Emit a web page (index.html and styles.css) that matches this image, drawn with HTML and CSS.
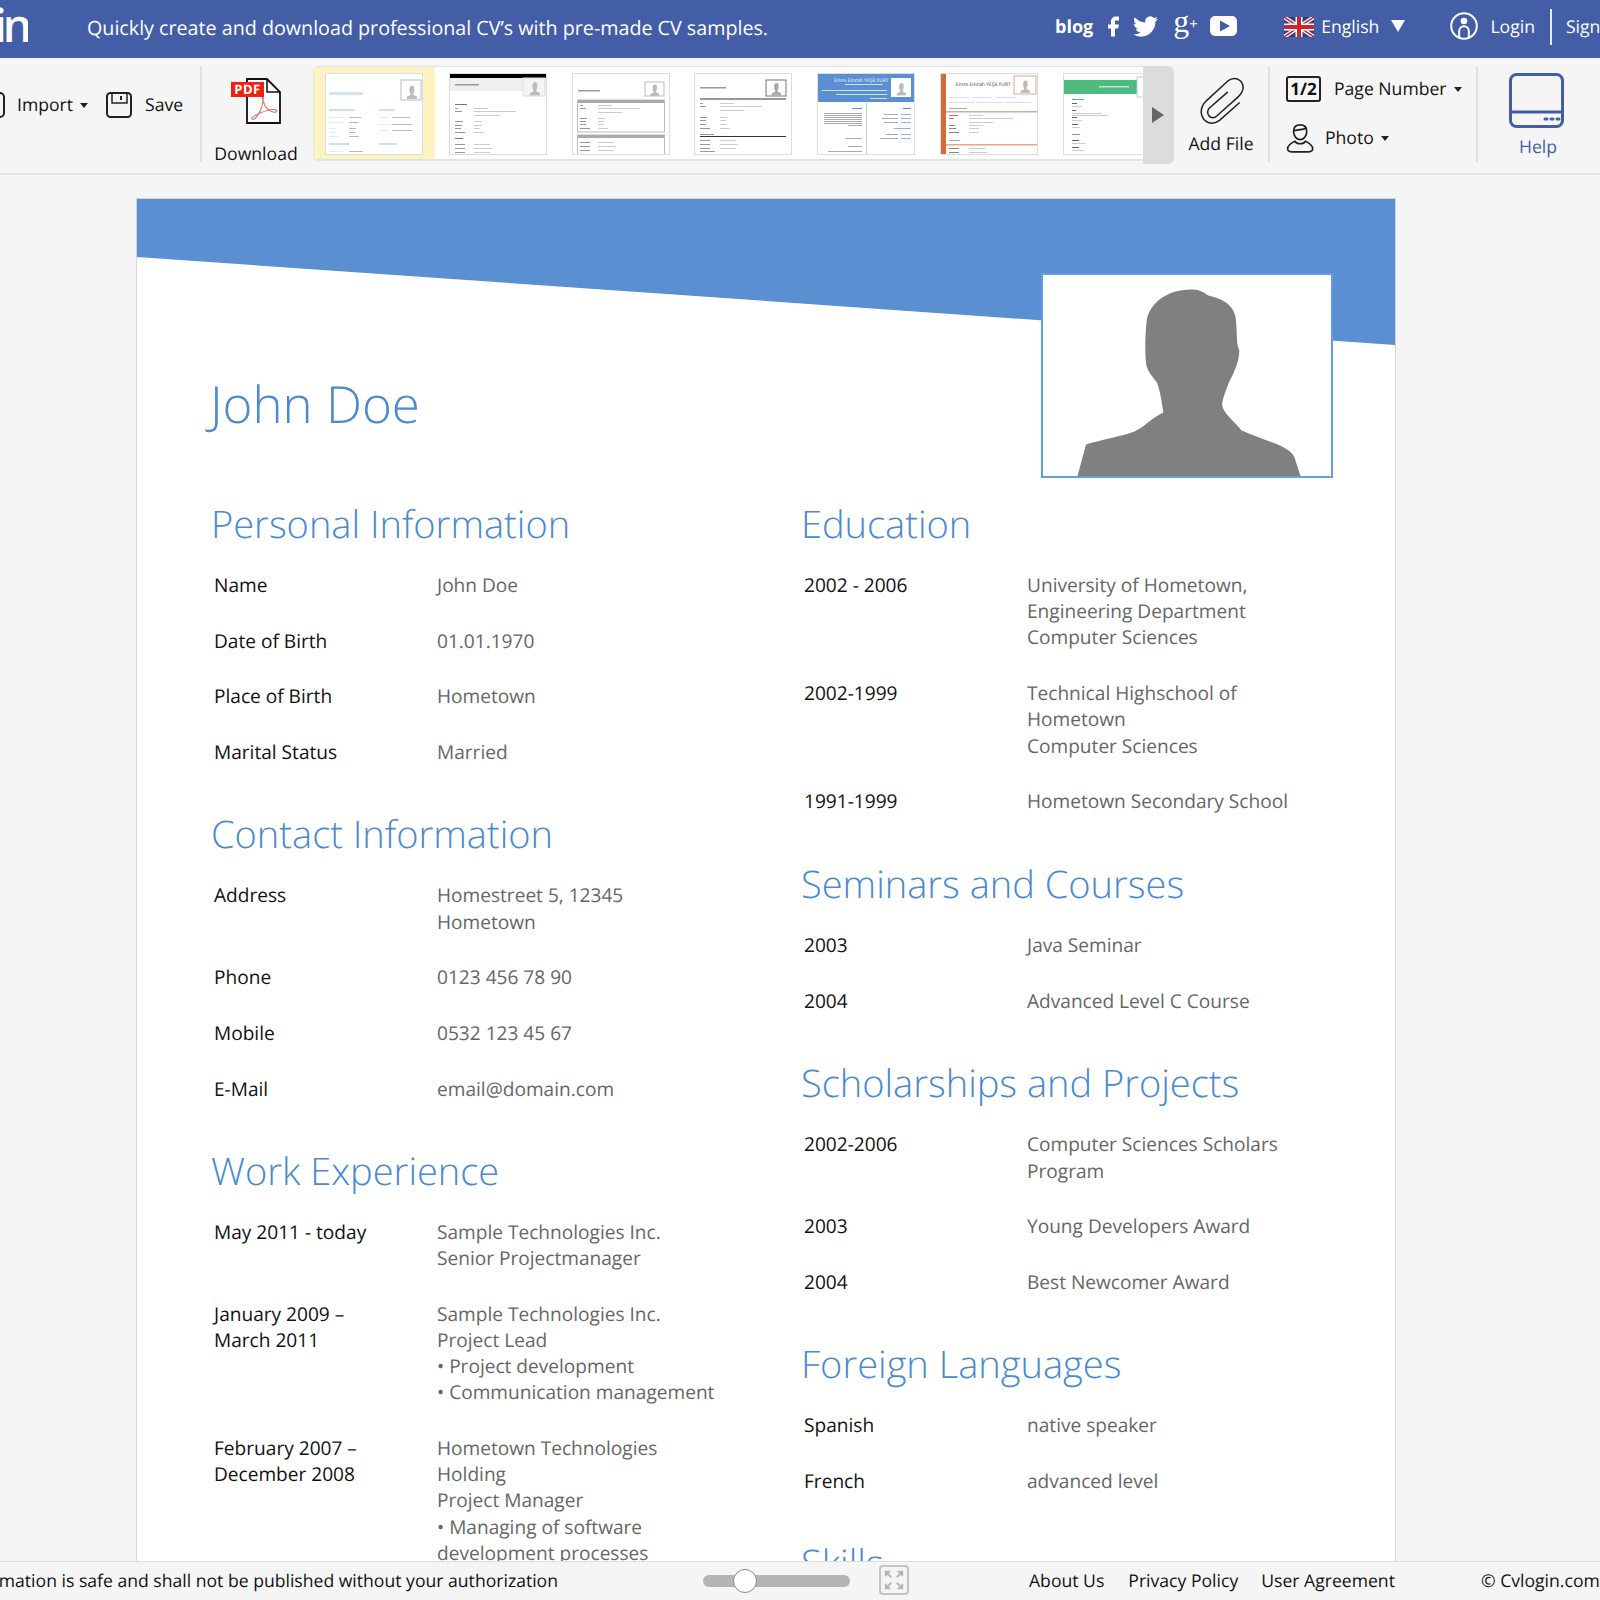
FILE: index.html
```html
<!DOCTYPE html>
<html lang="en">
<head>
  <meta charset="UTF-8">
  <title>Cvlogin - CV Editor</title>
  <link rel="stylesheet" href="styles.css">
</head>
<body>

<svg class="cv-defs" width="0" height="0">
  <symbol id="mini-head" viewBox="0 0 24 24">
    <path d="M4 24l1-4 5-2 .6-2-1.600-3-.4-5 1-4 3-1.500 3 1 1 4-.4 5-1.600 3 .6 2 5 2 1 4z"/>
  </symbol>
</svg>

<header class="topbar">
  <div class="topbar-logo"><span>Cvlogin</span></div>
  <div class="topbar-tagline">Quickly create and download professional CV’s with pre-made CV samples.</div>
  <div class="topbar-right">
    <a class="topbar-blog">blog</a>
    <svg class="icon-f" viewBox="6 4 11 20"><path d="M14 8h3V4h-3c-3 0-5 2-5 5v3H6v4h3v8h4v-8h3l1-4h-4V9c0-.6.4-1 1-1z"/></svg>
    <svg class="icon-tw" viewBox="0 2 24 20"><path d="M23.953 4.57a10 10 0 01-2.825.775 4.958 4.958 0 002.163-2.723c-.951.555-2.005.959-3.127 1.184a4.92 4.92 0 00-8.384 4.482C7.69 8.095 4.067 6.13 1.64 3.162a4.822 4.822 0 00-.666 2.475c0 1.710.87 3.213 2.188 4.096a4.904 4.904 0 01-2.228-.616v.06a4.923 4.923 0 003.946 4.827 4.996 4.996 0 01-2.212.085 4.936 4.936 0 004.604 3.417 9.867 9.867 0 01-6.102 2.105c-.39 0-.779-.023-1.170-.067a13.995 13.995 0 007.557 2.209c9.053 0 13.998-7.496 13.998-13.985 0-.21 0-.42-.015-.63A9.935 9.935 0 0024 4.59z"/></svg>
    <span class="icon-gplus">g<small>+</small></span>
    <svg class="icon-yt" viewBox="0 0 27 20"><path fill-rule="evenodd" d="M5 0h17a5 5 0 015 5v10a5 5 0 01-5 5H5a5 5 0 01-5-5V5a5 5 0 015-5zm5 4.500v11l10-5.500z"/></svg>
    <svg class="icon-flag" viewBox="0 0 30 20">
      <rect width="30" height="20" rx="1" fill="#2b3f87"/>
      <path d="M0 0l30 20M30 0L0 20" stroke="#fff" stroke-width="4"/>
      <path d="M0 0l30 20M30 0L0 20" stroke="#d2232c" stroke-width="1.500"/>
      <path d="M15 0v20M0 10h30" stroke="#fff" stroke-width="7"/>
      <path d="M15 0v20M0 10h30" stroke="#d2232c" stroke-width="4"/>
    </svg>
    <span class="topbar-lang">English</span>
    <span class="tri-down"></span>
    <svg class="icon-user" viewBox="0 0 28 28" fill="none" stroke="#fff">
      <circle cx="14" cy="14" r="12.800" stroke-width="2"/>
      <circle cx="14" cy="9" r="3.300" fill="#fff" stroke="none"/>
      <path d="M9.200 26V19a4.800 4.800 0 019.600 0v7" stroke-width="2"/>
    </svg>
    <span class="topbar-login">Login</span>
    <span class="topbar-sep"></span>
    <span class="topbar-sign">Sign up</span>
  </div>
</header>

<nav class="toolbar">
  <div class="tool-files">
    <svg class="icon-import" viewBox="0 0 26 26" fill="none" stroke="#222" stroke-width="2"><rect x="1" y="1" width="24" height="24" rx="4"/></svg>
    <span>Import</span>
    <span class="caret"></span>
    <svg class="icon-save" viewBox="0 0 26 26" fill="none" stroke="#222" stroke-width="2">
      <rect x="1" y="1" width="24" height="24" rx="3.500"/>
      <path d="M6 1v10h15V1" stroke-width="1.500"/>
      <path d="M15 4v4"/>
    </svg>
    <span>Save</span>
  </div>

  <div class="tool-download">
    <svg class="icon-pdf" viewBox="0 0 48 47">
      <path d="M13 1h20l13 13v31H13z" fill="#fff" stroke="#111" stroke-width="1.800"/>
      <path d="M33 1v13h13" fill="none" stroke="#111" stroke-width="1.500"/>
      <path d="M18 41c3 2 8-6 10-13 1-4 2-8 1-10-1-1-1 2 0 5 2 6 6 10 10 11 3 1 5-1 3-2-5-2-14 2-20 5-3 2-5 3-4 4z" fill="none" stroke="#e8706a" stroke-width="1.100"/>
    </svg>
    <span class="pdf-badge">PDF</span>
    <span class="tool-download-label">Download</span>
  </div>

  <div class="template-strip">
    <div class="template-list">
      <div class="template-item template-item-active">
        <svg class="thumb" viewBox="0 0 96 80">
          <rect x="75" y="6" width="20" height="20" fill="#fff" stroke="#a9c0d8"/>
          <use href="#mini-head" x="78" y="9" width="15" height="17" fill="#bbb"/>
          <rect x="3" y="18" width="34" height="3" fill="#d5e2f0"/>
          <rect x="3" y="35" width="26" height="2" fill="#cfdeef"/><rect x="53" y="35" width="16" height="2" fill="#cfdeef"/>
          <g fill="#e2eaf3"><rect x="3" y="43" width="16" height="1"/><rect x="3" y="48" width="13" height="1"/><rect x="3" y="54" width="8" height="1"/><rect x="3" y="58" width="7" height="1"/><rect x="3" y="62" width="10" height="1"/><rect x="53" y="43" width="10" height="1"/><rect x="53" y="50" width="10" height="1"/><rect x="53" y="56" width="10" height="1"/></g>
          <g fill="#bbb"><rect x="23" y="43" width="12" height="1"/><rect x="23" y="48" width="9" height="1"/><rect x="23" y="54" width="7" height="1"/><rect x="23" y="58" width="6" height="1"/><rect x="23" y="62" width="10" height="1"/><rect x="66" y="43" width="18" height="1"/><rect x="66" y="50" width="20" height="1"/><rect x="66" y="56" width="20" height="1"/></g>
          <rect x="3" y="69" width="20" height="2" fill="#cfdeef"/><rect x="53" y="69" width="18" height="2" fill="#cfdeef"/>
          <rect x="3" y="77" width="14" height="1" fill="#e2eaf3"/><rect x="23" y="77" width="14" height="1" fill="#bbb"/>
        </svg>
      </div>
      <div class="template-item">
        <svg class="thumb" viewBox="0 0 96 80">
          <rect width="96" height="4" fill="#000"/><rect y="4" width="96" height="13" fill="#f0f0f0"/>
          <rect x="73" y="4" width="22" height="18" fill="#f4f4f4" stroke="#ddd"/>
          <use href="#mini-head" x="77" y="6" width="15" height="16" fill="#bbb"/>
          <rect x="5" y="10" width="24" height="1.500" fill="#999"/>
          <rect x="5" y="30" width="12" height="1" fill="#777"/>
          <g fill="#999"><rect x="5" y="34" width="3" height="1"/><rect x="5" y="37" width="7" height="1"/><rect x="5" y="47" width="8" height="1"/><rect x="5" y="51" width="7" height="1"/><rect x="5" y="54" width="6" height="1"/><rect x="5" y="58" width="10" height="1"/></g>
          <g fill="#ccc"><rect x="24" y="34" width="14" height="1"/><rect x="24" y="37" width="42" height="1"/><rect x="24" y="41" width="26" height="1"/><rect x="24" y="47" width="8" height="1"/><rect x="24" y="51" width="7" height="1"/><rect x="24" y="54" width="6" height="1"/><rect x="24" y="58" width="10" height="1"/><rect x="24" y="70" width="16" height="1"/><rect x="24" y="74" width="18" height="1"/><rect x="24" y="78" width="16" height="1"/></g>
          <rect x="5" y="64" width="8" height="1" fill="#777"/>
          <g fill="#999"><rect x="5" y="70" width="10" height="1"/><rect x="5" y="74" width="10" height="1"/><rect x="5" y="78" width="10" height="1"/></g>
        </svg>
      </div>
      <div class="template-item">
        <svg class="thumb" viewBox="0 0 96 80">
          <rect x="72" y="8" width="19" height="14" fill="#fff" stroke="#bbb"/>
          <use href="#mini-head" x="75" y="9" width="13" height="13" fill="#bbb"/>
          <rect x="5" y="16" width="22" height="1.500" fill="#999"/>
          <rect x="4.500" y="26" width="87" height="32" fill="#fff" stroke="#bbb"/><rect x="5" y="26" width="86" height="3" fill="#aaa"/>
          <g fill="#999"><rect x="7" y="31" width="3" height="1"/><rect x="7" y="34" width="6" height="1"/><rect x="7" y="44" width="7" height="1"/><rect x="7" y="47" width="6" height="1"/><rect x="7" y="50" width="6" height="1"/><rect x="7" y="54" width="10" height="1"/></g>
          <g fill="#ccc"><rect x="25" y="31" width="14" height="1"/><rect x="25" y="34" width="42" height="1"/><rect x="25" y="38" width="24" height="1"/><rect x="25" y="44" width="7" height="1"/><rect x="25" y="47" width="6" height="1"/><rect x="25" y="50" width="6" height="1"/><rect x="25" y="54" width="10" height="1"/></g>
          <rect x="4.500" y="61" width="87" height="20" fill="#fff" stroke="#bbb"/><rect x="5" y="61" width="86" height="3" fill="#aaa"/>
          <g fill="#999"><rect x="7" y="68" width="10" height="1"/><rect x="7" y="72" width="10" height="1"/><rect x="7" y="76" width="10" height="1"/></g>
          <g fill="#ccc"><rect x="25" y="68" width="16" height="1"/><rect x="25" y="72" width="18" height="1"/><rect x="25" y="76" width="16" height="1"/></g>
        </svg>
      </div>
      <div class="template-item">
        <svg class="thumb" viewBox="0 0 96 80">
          <rect x="71" y="6" width="20" height="16" fill="#fff" stroke="#777"/>
          <use href="#mini-head" x="74" y="7" width="14" height="15" fill="#aaa"/>
          <rect x="5" y="13" width="26" height="1.500" fill="#999"/>
          <rect x="5" y="24" width="86" height="2" fill="#999"/>
          <g fill="#999"><rect x="5" y="29" width="3" height="1"/><rect x="5" y="32" width="6" height="1"/><rect x="5" y="43" width="7" height="1"/><rect x="5" y="46" width="6" height="1"/><rect x="5" y="50" width="6" height="1"/><rect x="5" y="54" width="10" height="1"/><rect x="5" y="66" width="10" height="1"/><rect x="5" y="70" width="10" height="1"/><rect x="5" y="74" width="10" height="1"/></g>
          <g fill="#ccc"><rect x="25" y="29" width="14" height="1"/><rect x="25" y="32" width="42" height="1"/><rect x="25" y="36" width="24" height="1"/><rect x="25" y="43" width="7" height="1"/><rect x="25" y="46" width="6" height="1"/><rect x="25" y="50" width="6" height="1"/><rect x="25" y="54" width="10" height="1"/><rect x="25" y="66" width="16" height="1"/><rect x="25" y="70" width="18" height="1"/><rect x="25" y="74" width="16" height="1"/></g>
          <rect x="5" y="60" width="14" height="1" fill="#999"/><rect x="5" y="62" width="86" height="1" fill="#333"/>
          <rect x="5" y="77" width="15" height="1" fill="#999"/>
        </svg>
      </div>
      <div class="template-item">
        <svg class="thumb" viewBox="0 0 96 80">
          <rect width="96" height="28" fill="#5a8fd1"/>
          <text x="16" y="8" class="thumb-name" fill="#fff">Emre Emrah YEŞİLYURT</text>
          <rect x="27" y="10" width="38" height="1" fill="#cfe0f5"/>
          <rect x="4" y="16" width="65" height="1" fill="#cfe0f5"/><rect x="18" y="20" width="51" height="1" fill="#cfe0f5"/><rect x="52" y="24" width="17" height="1" fill="#cfe0f5"/>
          <rect x="73" y="4" width="20" height="19" fill="#fff"/>
          <use href="#mini-head" x="76" y="6" width="14" height="17" fill="#bbb"/>
          <rect x="48" y="29" width="1" height="51" fill="#bcd6ea"/>
          <rect x="34" y="34" width="10" height="1" fill="#5a8fd1"/><rect x="85" y="34" width="8" height="1" fill="#5a8fd1"/>
          <g fill="#aaa"><rect x="6" y="39" width="38" height="1"/><rect x="6" y="41" width="38" height="1"/><rect x="6" y="43" width="38" height="1"/><rect x="6" y="45" width="38" height="1"/><rect x="6" y="47" width="38" height="1"/><rect x="6" y="49" width="38" height="1"/><rect x="30" y="51" width="14" height="1"/><rect x="30" y="72" width="14" height="1"/><rect x="10" y="77" width="34" height="1"/><rect x="66" y="40" width="14" height="1"/><rect x="64" y="44" width="16" height="1"/><rect x="66" y="48" width="14" height="1"/><rect x="68" y="60" width="12" height="1"/><rect x="62" y="64" width="18" height="1"/></g>
          <g fill="#8db4e2"><rect x="83" y="40" width="10" height="1"/><rect x="83" y="44" width="10" height="1"/><rect x="83" y="48" width="10" height="1"/><rect x="83" y="60" width="10" height="1"/><rect x="83" y="64" width="10" height="1"/><rect x="76" y="54" width="17" height="1"/><rect x="27" y="64" width="17" height="1"/></g>
        </svg>
      </div>
      <div class="template-item">
        <svg class="thumb" viewBox="0 0 96 80">
          <rect width="5" height="80" fill="#d46a35"/>
          <text x="15" y="12" class="thumb-name" fill="#333">Emre Emrah YEŞİLYURT</text>
          <rect x="73" y="2" width="22" height="18" fill="#fff" stroke="#e0a88c"/>
          <use href="#mini-head" x="77" y="4" width="14" height="16" fill="#bbb"/>
          <g fill="#ddd"><rect x="8" y="23" width="20" height="1"/><rect x="31" y="23" width="20" height="1"/><rect x="54" y="23" width="20" height="1"/><rect x="8" y="28" width="26" height="1"/><rect x="36" y="28" width="26" height="1"/><rect x="64" y="28" width="26" height="1"/></g>
          <rect x="8" y="34" width="18" height="1" fill="#aaa"/><rect x="5" y="37" width="91" height="1.500" fill="#e0a88c"/>
          <g fill="#888"><rect x="8" y="41" width="9" height="1"/><rect x="8" y="44" width="5" height="1"/><rect x="8" y="51" width="6" height="1"/><rect x="8" y="54" width="7" height="1"/><rect x="8" y="58" width="10" height="1"/><rect x="8" y="74" width="10" height="1"/><rect x="8" y="78" width="10" height="1"/></g>
          <g fill="#ccc"><rect x="28" y="41" width="14" height="1"/><rect x="28" y="44" width="44" height="1"/><rect x="28" y="48" width="24" height="1"/><rect x="28" y="51" width="14" height="1"/><rect x="28" y="54" width="10" height="1"/><rect x="28" y="58" width="10" height="1"/><rect x="28" y="74" width="16" height="1"/><rect x="28" y="78" width="18" height="1"/></g>
          <rect x="8" y="66" width="11" height="1" fill="#aaa"/><rect x="5" y="70" width="91" height="1.500" fill="#e0a88c"/>
        </svg>
      </div>
      <div class="template-item">
        <svg class="thumb" viewBox="0 0 96 80">
          <rect y="6" width="76" height="14" fill="#4dbb7f"/>
          <rect x="35" y="12" width="30" height="1.500" fill="#bfe8d0"/>
          <rect x="73" y="3" width="20" height="20" fill="#fff" stroke="#a6dcbc"/>
          <g fill="#4dbb7f"><rect x="8" y="25" width="12" height="1"/><rect x="8" y="60" width="8" height="1"/></g>
          <g fill="#666"><rect x="8" y="29" width="5" height="1"/><rect x="8" y="36" width="4" height="1"/><rect x="8" y="43" width="5" height="1"/><rect x="8" y="50" width="6" height="1"/><rect x="8" y="66" width="7" height="1"/><rect x="8" y="73" width="7" height="1"/></g>
          <g fill="#ccc"><rect x="8" y="32" width="10" height="1"/><rect x="8" y="39" width="30" height="1"/><rect x="8" y="41" width="36" height="1"/><rect x="8" y="46" width="10" height="1"/><rect x="8" y="53" width="8" height="1"/><rect x="8" y="69" width="14" height="1"/><rect x="8" y="76" width="12" height="1"/></g>
        </svg>
      </div>
    </div>
    <div class="template-next"><span class="tri-right"></span></div>
  </div>

  <div class="tool-addfile">
    <svg class="icon-clip" viewBox="85 50 145 145" fill="none" stroke="#222" stroke-width="4.500">
      <path d="M208 127L147 181C125 198 97 188 92 160C90 142 97 132 107 122L172 62C195 45 220 60 218 85C216 98 210 104 200 113L136 170C118 180 105 160 115 145L172 95"/>
    </svg>
    <span>Add File</span>
  </div>

  <div class="tool-options">
    <div class="tool-option">
      <span class="page-badge">1/2</span>
      <span class="option-label">Page Number</span>
      <span class="caret"></span>
    </div>
    <div class="tool-option">
      <svg class="icon-photo" viewBox="345 185 85 90" fill="none" stroke="#222" stroke-width="5">
        <path d="M368 210C368 195 378 190 388 190C398 190 408 195 408 210C408 225 398 235 388 235C378 235 368 225 368 210Z"/>
        <path d="M368 208C380 205 395 205 408 200"/>
        <path d="M372 240C355 248 350 255 350 263C350 270 355 272 362 272H414C421 272 426 270 426 263C426 255 421 248 404 240C398 250 378 250 372 240Z"/>
      </svg>
      <span class="option-label-photo">Photo</span>
      <span class="caret"></span>
    </div>
  </div>

  <div class="tool-help">
    <svg class="icon-help" viewBox="0 0 55 55" fill="none" stroke="#435ea7" stroke-width="3">
      <rect x="1.500" y="1.500" width="52" height="52" rx="6"/>
      <path d="M2 39h51"/>
      <path d="M36 46h2M42 46h2M48 46h2" stroke-linecap="round"/>
    </svg>
    <span>Help</span>
  </div>
</nav>

<main class="workspace">
  <article class="cv">
    <div class="cv-banner"></div>
    <div class="cv-photo">
      <svg viewBox="129 105 864 600">
        <path fill="#808080" d="M232 708L258 612C300 598 370 586 405 572C435 558 450 535 490 516C485 480 478 440 470 425C452 400 440 390 438 365C434 330 436 280 440 240C448 190 500 146 575 147C600 146 610 156 625 165C670 175 705 195 708 240C712 280 708 310 718 330C718 365 700 400 685 430C675 460 665 480 667 495C668 515 700 540 725 570C770 590 820 605 850 620C880 635 885 650 888 665L902 708Z"/>
      </svg>
    </div>
    <h1 class="cv-name">John Doe</h1>
    <div class="cv-columns">
      <div class="cv-col">
        <section class="cv-section">
          <h2>Personal Information</h2>
          <div class="cv-row"><div class="cv-key">Name</div><div class="cv-val">John Doe</div></div>
          <div class="cv-row"><div class="cv-key">Date of Birth</div><div class="cv-val">01.01.1970</div></div>
          <div class="cv-row"><div class="cv-key">Place of Birth</div><div class="cv-val">Hometown</div></div>
          <div class="cv-row"><div class="cv-key">Marital Status</div><div class="cv-val">Married</div></div>
        </section>
        <section class="cv-section">
          <h2>Contact Information</h2>
          <div class="cv-row"><div class="cv-key">Address</div><div class="cv-val">Homestreet 5, 12345<br>Hometown</div></div>
          <div class="cv-row"><div class="cv-key">Phone</div><div class="cv-val">0123 456 78 90</div></div>
          <div class="cv-row"><div class="cv-key">Mobile</div><div class="cv-val">0532 123 45 67</div></div>
          <div class="cv-row"><div class="cv-key">E-Mail</div><div class="cv-val">email@domain.com</div></div>
        </section>
        <section class="cv-section">
          <h2>Work Experience</h2>
          <div class="cv-row"><div class="cv-key">May 2011 - today</div><div class="cv-val">Sample Technologies Inc.<br>Senior Projectmanager</div></div>
          <div class="cv-row"><div class="cv-key">January 2009 –<br>March 2011</div><div class="cv-val">Sample Technologies Inc.<br>Project Lead<br>• Project development<br>• Communication management</div></div>
          <div class="cv-row"><div class="cv-key">February 2007 –<br>December 2008</div><div class="cv-val">Hometown Technologies<br>Holding<br>Project Manager<br>• Managing of software<br>development processes</div></div>
        </section>
      </div>
      <div class="cv-col">
        <section class="cv-section cv-section-education">
          <h2>Education</h2>
          <div class="cv-row"><div class="cv-key">2002 - 2006</div><div class="cv-val">University of Hometown,<br>Engineering Department<br>Computer Sciences</div></div>
          <div class="cv-row"><div class="cv-key">2002-1999</div><div class="cv-val">Technical Highschool of<br>Hometown<br>Computer Sciences</div></div>
          <div class="cv-row"><div class="cv-key">1991-1999</div><div class="cv-val">Hometown Secondary School</div></div>
        </section>
        <section class="cv-section">
          <h2>Seminars and Courses</h2>
          <div class="cv-row"><div class="cv-key">2003</div><div class="cv-val">Java Seminar</div></div>
          <div class="cv-row"><div class="cv-key">2004</div><div class="cv-val">Advanced Level C Course</div></div>
        </section>
        <section class="cv-section">
          <h2>Scholarships and Projects</h2>
          <div class="cv-row"><div class="cv-key">2002-2006</div><div class="cv-val">Computer Sciences Scholars<br>Program</div></div>
          <div class="cv-row"><div class="cv-key">2003</div><div class="cv-val">Young Developers Award</div></div>
          <div class="cv-row"><div class="cv-key">2004</div><div class="cv-val">Best Newcomer Award</div></div>
        </section>
        <section class="cv-section">
          <h2>Foreign Languages</h2>
          <div class="cv-row"><div class="cv-key">Spanish</div><div class="cv-val">native speaker</div></div>
          <div class="cv-row"><div class="cv-key">French</div><div class="cv-val">advanced level</div></div>
        </section>
        <section class="cv-section">
          <h2>Skills</h2>
        </section>
      </div>
    </div>
  </article>
</main>

<footer class="statusbar">
  <div class="status-note"><span>Your information is safe and shall not be published without your authorization</span></div>
  <div class="zoom-slider"><span class="zoom-knob"></span></div>
  <div class="zoom-expand">
    <svg viewBox="0 0 24 24" fill="none" stroke="#b5b5b5" stroke-width="2">
      <path d="M3 8V3h5M3 3l6 6M16 3h5v5M21 3l-6 6M3 16v5h5M3 21l6-6M21 16v5h-5M21 21l-6-6"/>
    </svg>
  </div>
  <a class="status-link status-about">About Us</a>
  <a class="status-link status-privacy">Privacy Policy</a>
  <a class="status-link status-terms">User Agreement</a>
  <span class="status-copy">© Cvlogin.com</span>
</footer>

</body>
</html>
```

FILE: styles.css
```css
* {
  box-sizing: border-box;
}

html, body {
  margin: 0;
  height: 100%;
}

body {
  display: flex;
  flex-direction: column;
  height: 1600px;
  overflow: hidden;
  font-family: "Open Sans", sans-serif;
  text-rendering: geometricPrecision;
  background: #f5f5f5;
  color: #111;
}

.cv-defs {
  position: absolute;
}

/* top bar */
.topbar {
  display: flex;
  align-items: center;
  flex: none;
  height: 58px;
  background: #435ea7;
  color: #fff;
}

.topbar-logo {
  display: flex;
  justify-content: flex-end;
  align-self: flex-start;
  flex: none;
  width: 28px;
  overflow: hidden;
  font-size: 46px;
  font-weight: 600;
  line-height: 50px;
  letter-spacing: -4px;
}

.topbar-tagline {
  flex: 1;
  margin-left: 59px;
  margin-top: -4px;
  font-size: 19.7px;
}

.topbar-right {
  display: flex;
  align-items: center;
  flex: none;
  width: 545px;
  height: 58px;
  overflow: hidden;
  white-space: nowrap;
  font-size: 17.6px;
}

.topbar-right > * {
  flex: none;
}

.topbar-blog {
  font-weight: 700;
  font-size: 18px;
  margin-top: -4px;
}

.icon-f {
  width: 11px;
  height: 21px;
  margin-left: 15px;
  margin-top: -5px;
  fill: #fff;
}

.icon-tw {
  width: 25px;
  height: 21px;
  margin-left: 14px;
  margin-top: -5px;
  fill: #fff;
}

.icon-gplus {
  width: 24px;
  margin-left: 15px;
  margin-top: -14px;
  font-family: "Liberation Serif", serif;
  font-size: 32px;
  line-height: 30px;
}

.icon-gplus small {
  font-family: "Open Sans", sans-serif;
  font-size: 15px;
  vertical-align: 3px;
}

.icon-yt {
  width: 27px;
  height: 20px;
  margin-left: 13px;
  margin-top: -7px;
  fill: #fff;
}

.icon-flag {
  width: 30px;
  height: 20px;
  margin-left: 47px;
  margin-top: -4px;
}

.topbar-lang {
  margin-left: 7px;
  margin-top: -5px;
}

.tri-down {
  width: 0;
  height: 0;
  margin-left: 12px;
  margin-top: -6px;
  border-left: 7.5px solid transparent;
  border-right: 7.5px solid transparent;
  border-top: 12px solid #fff;
}

.icon-user {
  width: 28px;
  height: 28px;
  margin-left: 45px;
  margin-top: -7px;
}

.topbar-login {
  margin-left: 12px;
  margin-top: -5px;
}

.topbar-sep {
  width: 2px;
  height: 36px;
  margin-left: 15px;
  margin-top: -4px;
  background: #e8ecf5;
}

.topbar-sign {
  margin-left: 14px;
  margin-top: -5px;
}

/* toolbar */
.toolbar {
  display: flex;
  flex: none;
  height: 117px;
  border-bottom: 2px solid #e1e5e5;
  background: #f5f5f5;
  font-size: 17.6px;
  color: #111;
}

.tool-files {
  display: flex;
  align-items: center;
  flex: none;
  width: 202px;
  height: 96px;
  margin-top: 8px;
  padding-bottom: 18px;
  border-right: 2px solid #e3e3e3;
}

.tool-files svg {
  flex: none;
}

.icon-import {
  width: 26px;
  height: 26px;
  margin-left: -21px;
  margin-right: 12px;
}

.icon-save {
  width: 26px;
  height: 26px;
  margin-left: 18px;
  margin-right: 13px;
}

.caret {
  flex: none;
  width: 0;
  height: 0;
  margin-left: 7px;
  border-left: 4px solid transparent;
  border-right: 4px solid transparent;
  border-top: 5px solid #222;
}

.tool-download {
  position: relative;
  display: flex;
  flex-direction: column;
  align-items: center;
  flex: none;
  width: 111px;
  padding-top: 20px;
}

.icon-pdf {
  width: 48px;
  height: 47px;
  margin-bottom: 17px;
}

.tool-download-label {
  margin-right: 3px;
}

.pdf-badge {
  position: absolute;
  left: 29px;
  top: 24px;
  width: 33px;
  height: 15px;
  background: #ee2211;
  color: #fff;
  font-size: 13px;
  font-weight: 700;
  line-height: 15px;
  letter-spacing: 0.5px;
  text-align: center;
}

.template-strip {
  display: flex;
  flex: none;
  width: 861px;
  height: 98px;
  margin-top: 8px;
}

.template-list {
  display: flex;
  width: 830px;
  height: 95px;
  overflow: hidden;
  border: 1px solid #e1e5e5;
  border-right: 0;
  border-bottom-width: 2px;
  border-radius: 5px 0 0 5px;
  background: #fff;
}

.template-item {
  flex: none;
  width: 122.8px;
  padding: 7px 0 0 13px;
  background: #fff;
}

.template-item-active {
  width: 121px;
  margin-right: 1.8px;
  padding-left: 12px;
  background: #fdf3c0;
}

.thumb {
  display: block;
  width: 96px;
  height: 80px;
  background: #fff;
  outline: 1px solid #ddd;
}

.thumb-name {
  font-family: "Open Sans", sans-serif;
  font-size: 5px;
}

.template-next {
  display: flex;
  align-items: center;
  justify-content: center;
  width: 31px;
  border-radius: 0 6px 6px 0;
  background: #dcdcdc;
}

.tri-right {
  width: 0;
  height: 0;
  margin-left: -2px;
  border-top: 8px solid transparent;
  border-bottom: 8px solid transparent;
  border-left: 12px solid #666;
}

.tool-addfile {
  display: flex;
  flex-direction: column;
  align-items: center;
  flex: none;
  width: 96px;
  height: 96px;
  margin-top: 8px;
  padding-top: 11px;
  border-right: 2px solid #e3e3e3;
}

.icon-clip {
  width: 48px;
  height: 48px;
  margin-bottom: 7px;
  margin-left: 3px;
}

.tool-options {
  display: flex;
  flex-direction: column;
  flex: none;
  width: 208px;
  height: 96px;
  margin-top: 8px;
  padding: 10px 0 0 16px;
  border-right: 2px solid #e3e3e3;
}

.tool-option {
  display: flex;
  align-items: center;
  height: 28px;
  margin-bottom: 22px;
}

.page-badge {
  display: block;
  width: 35px;
  height: 26px;
  border: 2px solid #222;
  border-radius: 3px;
  font-size: 17px;
  font-weight: 700;
  line-height: 22px;
  text-align: center;
}

.option-label {
  margin-left: 13px;
}

.icon-photo {
  flex: none;
  width: 28px;
  height: 30px;
}

.option-label-photo {
  margin-left: 11px;
}

.tool-help {
  display: flex;
  flex-direction: column;
  align-items: center;
  flex: none;
  width: 120px;
  padding-top: 15px;
  color: #435ea7;
}

.icon-help {
  width: 55px;
  height: 55px;
  margin-bottom: 7px;
  margin-right: 3px;
}

/* cv page */
.workspace {
  flex: 1;
  min-height: 0;
  overflow: hidden;
  padding: 23px 0 0 136px;
}

.cv {
  position: relative;
  width: 1260px;
  min-height: 1500px;
  border: 1px solid #d6d6d6;
  background: #fff;
}

.cv-banner {
  height: 146px;
  background: #5a8fd1;
  clip-path: polygon(0 0, 100% 0, 100% 100%, 0 58px);
}

.cv-photo {
  position: absolute;
  left: 904px;
  top: 74px;
  width: 292px;
  height: 205px;
  border: 2px solid #649de2;
  background: #fff;
}

.cv-photo svg {
  display: block;
  width: 100%;
  height: 100%;
}

.cv-name {
  margin: 22px 0 0 73px;
  font-size: 51px;
  font-weight: 300;
  line-height: 72px;
  color: #4a8ad0;
}

.cv-columns {
  display: grid;
  grid-template-columns: 590px 1fr;
  margin-top: 59px;
  padding-left: 74px;
}

.cv-section {
  margin-bottom: 43px;
}

.cv-section-education {
  margin-bottom: 44px;
}

.cv-section h2 {
  margin: 0 0 22px;
  font-size: 38px;
  font-weight: 300;
  line-height: 52px;
  color: #4a8ad0;
}

.cv-row {
  display: grid;
  grid-template-columns: 223px 1fr;
  margin-bottom: 29.5px;
  padding-left: 3px;
  font-size: 19.1px;
  line-height: 26.2px;
}

.cv-key {
  color: #111;
}

.cv-val {
  color: #666;
}

/* bottom bar */
.statusbar {
  display: flex;
  align-items: center;
  flex: none;
  height: 39px;
  border-top: 1px solid #ddd;
  background: #f5f5f5;
  font-size: 17.6px;
  white-space: nowrap;
}

.status-note {
  display: flex;
  justify-content: flex-end;
  flex: none;
  width: 558px;
  overflow: hidden;
}

.zoom-slider {
  position: relative;
  flex: none;
  width: 147px;
  height: 12px;
  margin-left: 145px;
  border-radius: 6px;
  background: #b5b5b5;
}

.zoom-knob {
  position: absolute;
  left: 30px;
  top: -6px;
  width: 24px;
  height: 24px;
  border: 1px solid #888;
  border-radius: 50%;
  background: #fff;
}

.zoom-expand {
  flex: none;
  width: 30px;
  height: 30px;
  margin-left: 29px;
  margin-top: -3px;
  padding: 2px;
  border: 2px solid #c4c4c4;
  border-radius: 4px;
}

.zoom-expand svg {
  display: block;
}

.status-about {
  margin-left: 120px;
}

.status-privacy {
  margin-left: 24px;
}

.status-terms {
  margin-left: 23px;
}

.status-copy {
  margin-left: 86px;
}
```
